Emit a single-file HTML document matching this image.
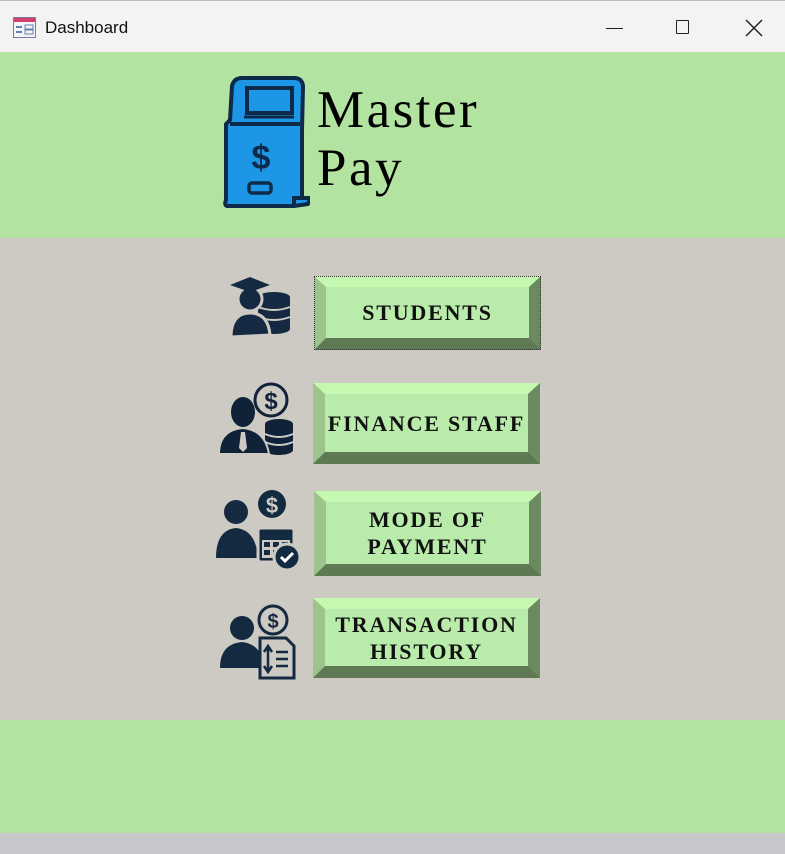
<!DOCTYPE html>
<html><head><style>
body{margin:0;width:785px;height:854px;overflow:hidden;font-family:"Liberation Sans",sans-serif;background:#c8c8cc;position:relative}
.a{position:absolute}
.btn{position:absolute;box-sizing:border-box;border-style:solid;border-width:11px 12px 12px 12px;border-color:#c5f8b0 #6c8a60 #5e7953 #9cc48b;background:#b9ebaa;display:flex;align-items:center;justify-content:center;text-align:center;font-family:"Liberation Serif",serif;font-weight:bold;font-size:22px;line-height:27px;color:#111;letter-spacing:1.8px;white-space:nowrap}
</style></head><body>
<div class="a" style="left:0;top:0;width:785px;height:52px;background:#f3f3f3;border-top:1px solid #bbb;box-sizing:border-box"></div>
<svg class="a" style="left:13px;top:17px" width="24" height="22"><rect x="0.5" y="0.5" width="22" height="20" fill="#f4f4f8" stroke="#7a7aa0"/><rect x="1" y="1" width="21" height="4" fill="#d04070"/><rect x="3" y="9" width="6" height="2" fill="#6080b0"/><rect x="3" y="14" width="6" height="2" fill="#6080b0"/><rect x="12" y="8" width="8" height="4" fill="none" stroke="#6080b0"/><rect x="12" y="13" width="8" height="4" fill="none" stroke="#6080b0"/></svg>
<div class="a" style="left:45px;top:18px;font-size:17px;color:#111">Dashboard</div>
<div class="a" style="left:606px;top:28px;width:17px;height:1px;background:#222"></div>
<div class="a" style="left:676px;top:20px;width:13px;height:14px;border:1.5px solid #222;box-sizing:border-box;border-radius:1px"></div>
<svg class="a" style="left:745px;top:19px" width="18" height="18"><path d="M1 1L17 17M17 1L1 17" stroke="#222" stroke-width="1.5"/></svg>
<div class="a" style="left:0;top:52px;width:785px;height:186px;background:#b3e3a1"></div>
<div class="a" style="left:0;top:238px;width:785px;height:482px;background:#cdc9c3"></div>
<div class="a" style="left:0;top:720px;width:785px;height:113px;background:#b3e3a1"></div>
<svg class="a" style="left:222px;top:74px" width="88" height="136" viewBox="0 0 88 136">
<path d="M20 4H72Q80 4 81 12L80 56V124L88 124L86 130L72 132H5Q2 131 4 126V50L8 46L10 12Q12 4 20 4Z" fill="#1e96e6" stroke="#0d2a4a" stroke-width="4" stroke-linejoin="round"/>
<path d="M8 50H78M72 132V124L80 124" fill="none" stroke="#0d2a4a" stroke-width="4"/>
<rect x="25" y="14" width="45" height="25" fill="#1e96e6" stroke="#0d2a4a" stroke-width="4"/>
<path d="M22 43H72" stroke="#0d2a4a" stroke-width="3"/>
<text x="39" y="95" text-anchor="middle" font-family="Liberation Sans" font-weight="bold" font-size="34" fill="#0d2a4a">$</text>
<rect x="27" y="109" width="22" height="10" rx="3" fill="#1e96e6" stroke="#0d2a4a" stroke-width="3.5"/>
</svg>
<div class="a" style="left:317px;top:81px;font-family:'Liberation Serif',serif;font-size:53px;line-height:58px;letter-spacing:2.5px;color:#000">Master<br>Pay</div>

<svg class="a" style="left:228px;top:277px" width="64" height="60" viewBox="0 0 64 60" fill="#152a42">
<ellipse cx="46" cy="20" rx="16" ry="5"/><rect x="30" y="20" width="32" height="32"/><ellipse cx="46" cy="52" rx="16" ry="5"/>
<path d="M30 30Q46 36 62 30M30 40Q46 46 62 40" stroke="#cdc9c3" stroke-width="2" fill="none"/>
<path d="M3 60Q3 36 22 36Q40 36 42 58Z" stroke="#cdc9c3" stroke-width="3"/>
<circle cx="22" cy="22" r="12" stroke="#cdc9c3" stroke-width="3"/>
<path d="M2 8L22 0L42 8L22 15Z"/>
</svg>
<svg class="a" style="left:217px;top:382px" width="80" height="74" viewBox="0 0 80 74" fill="#0f2238">
<circle cx="54" cy="18" r="16" fill="none" stroke="#0f2238" stroke-width="3"/>
<text x="54" y="27" text-anchor="middle" font-family="Liberation Sans" font-weight="bold" font-size="24">$</text>
<ellipse cx="62" cy="42" rx="14" ry="5"/><rect x="48" y="42" width="28" height="26"/><ellipse cx="62" cy="68" rx="14" ry="5"/>
<path d="M48 52Q62 58 76 52M48 60Q62 66 76 60" stroke="#cdc9c3" stroke-width="2" fill="none"/>
<path d="M2 72Q2 48 26 46Q48 48 52 72Z" stroke="#cdc9c3" stroke-width="2"/>
<ellipse cx="26" cy="30" rx="12" ry="15"/>
<path d="M24 50L28 50L30 66L26 70L22 66Z" fill="#cdc9c3"/>
</svg>
<svg class="a" style="left:214px;top:488px" width="88" height="84" viewBox="0 0 88 84" fill="#142a40">
<circle cx="58" cy="16" r="14"/><text x="58" y="25" text-anchor="middle" font-family="Liberation Sans" font-weight="bold" font-size="22" fill="#cdc9c3">$</text>
<circle cx="22" cy="24" r="12"/><path d="M2 70Q2 42 22 40Q42 42 44 70Z"/>
<rect x="44" y="40" width="36" height="34" rx="3" stroke="#cdc9c3" stroke-width="3"/>
<path d="M48 52H76V70H48Z" fill="#cdc9c3"/>
<path d="M50 54h6v5h-6zM59 54h6v5h-6zM68 54h6v5h-6zM50 62h6v5h-6zM59 62h6v5h-6z"/>
<circle cx="73" cy="69" r="13" stroke="#cdc9c3" stroke-width="3"/>
<path d="M67 69L71 73L79 65" stroke="#fff" stroke-width="3" fill="none"/>
</svg>
<svg class="a" style="left:218px;top:604px" width="80" height="76" viewBox="0 0 80 76" fill="#142a40">
<circle cx="55" cy="16" r="14" fill="none" stroke="#142a40" stroke-width="3"/><text x="55" y="24" text-anchor="middle" font-family="Liberation Sans" font-weight="bold" font-size="20">$</text>
<circle cx="24" cy="24" r="12"/><path d="M2 64Q2 40 24 38Q44 40 46 64Z"/>
<path d="M42 34H68L76 42V74H42Z" fill="#cdc9c3" stroke="#142a40" stroke-width="3"/>
<path d="M50 44V66M46 48L50 42L54 48M46 62L50 68L54 62M58 48H70M58 55H70M58 62H70" stroke="#142a40" stroke-width="2.5" fill="none"/>
</svg>

<div class="btn" style="left:314px;top:276px;width:227px;height:74px;outline:1px dotted #333;outline-offset:-1px">STUDENTS</div>
<div class="btn" style="left:313px;top:383px;width:227px;height:81px">FINANCE STAFF</div>
<div class="btn" style="left:314px;top:491px;width:227px;height:85px">MODE OF<br>PAYMENT</div>
<div class="btn" style="left:313px;top:598px;width:227px;height:80px">TRANSACTION<br>HISTORY</div>
</body></html>
